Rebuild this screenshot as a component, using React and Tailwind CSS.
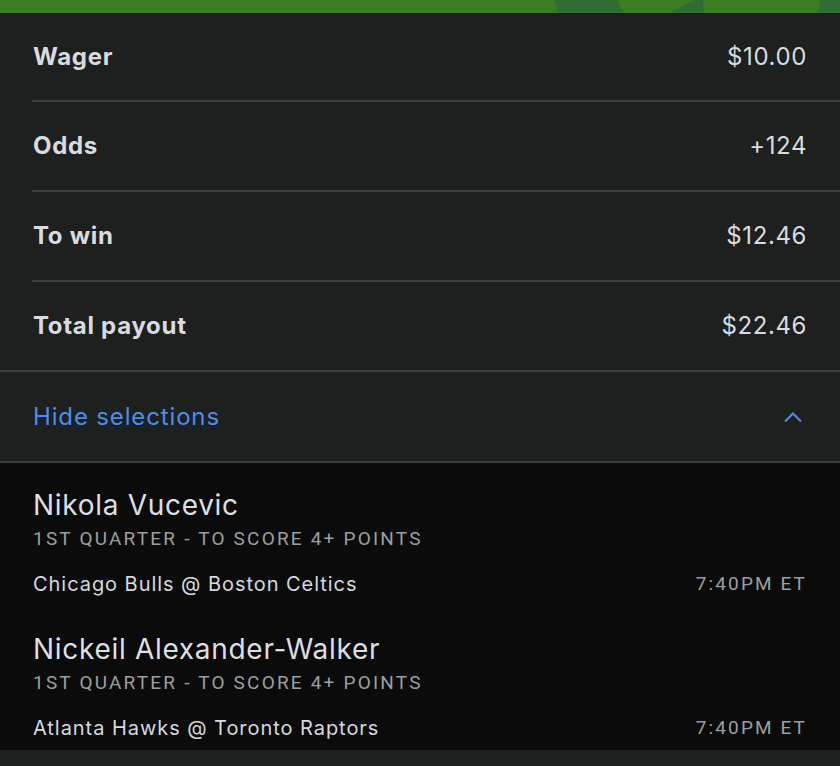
import React from "react";

const font = { fontFamily: '"Inter", "Open Sans", "Liberation Sans", sans-serif' };

function Row({ label, value, inset = true, h = "h-[88px]" }) {
  return (
    <div className={`flex flex-col`}>
      <div className={`flex items-center justify-between pl-[33px] pr-[33px] ${h}`}>
        <span className="text-[24px] font-bold tracking-[0.7px] text-[#d8dbdf]">{label}</span>
        <span className="text-[24px] tracking-[0.6px] text-[#d8dbdf]">{value}</span>
      </div>
      <div className={`h-[2px] bg-[#3c3d3d] ${inset ? "ml-[32px]" : ""}`} />
    </div>
  );
}

function Selection({ name, market, game, time }) {
  return (
    <div className="flex flex-col">
      <div className="text-[28px] leading-[34px] tracking-[0.7px] text-[#dcdfe3]">{name}</div>
      <div
        className="text-[19px] leading-[34px] tracking-[2.2px] uppercase text-[#9b9fa4]"
        style={{ fontFamily: '"Roboto", "Liberation Sans", sans-serif' }}
      >
        {market}
      </div>
      <div className="mt-[14px] flex h-[28px] items-center justify-between">
        <span className="text-[20px] tracking-[0.95px] text-[#d6d9dd]">{game}</span>
        <span
          className="text-[19px] tracking-[2.1px] text-[#9b9fa4]"
          style={{ fontFamily: '"Roboto", "Liberation Sans", sans-serif' }}
        >
          {time}
        </span>
      </div>
    </div>
  );
}

export default function App() {
  return (
    <div className="w-[840px] h-[766px] bg-[#1e1f1f] overflow-hidden" style={font}>
      <div className="relative h-[13px] bg-[#3b7d22] overflow-hidden">
        <svg className="absolute left-0 top-0" width="840" height="13" viewBox="0 0 840 13">
          <polygon points="554,0 617,0 624,13 558,13" fill="#2f6d35" />
          <polygon points="694,0 703,0 704,13 670,13" fill="#2f6d35" />
          <polygon points="820,0 840,0 840,13 818,13" fill="#2f6d35" />
        </svg>
      </div>
      <Row label="Wager" value="$10.00" h="h-[87px]" />
      <Row label="Odds" value="+124" />
      <Row label="To win" value="$12.46" />
      <Row label="Total payout" value="$22.46" inset={false} />
      <div className="flex h-[89px] items-center justify-between pl-[33px] pr-[33px]">
        <span className="text-[24px] tracking-[0.85px] text-[#4a8ee9]">Hide selections</span>
        <svg width="18" height="12" viewBox="0 0 18 12" className="mr-[5px]">
          <polyline points="1,10.5 9,2.5 17,10.5" fill="none" stroke="#4a8ee9" strokeWidth="2" />
        </svg>
      </div>
      <div className="h-[2px] bg-[#3c3d3d]" />
      <div className="flex flex-col gap-[34px] bg-[#0b0b0b] pl-[33px] pr-[33px] pt-[25px] pb-[8px]">
        <Selection
          name="Nikola Vucevic"
          market="1st Quarter - To Score 4+ Points"
          game="Chicago Bulls @ Boston Celtics"
          time="7:40PM ET"
        />
        <Selection
          name="Nickeil Alexander-Walker"
          market="1st Quarter - To Score 4+ Points"
          game="Atlanta Hawks @ Toronto Raptors"
          time="7:40PM ET"
        />
      </div>
    </div>
  );
}
